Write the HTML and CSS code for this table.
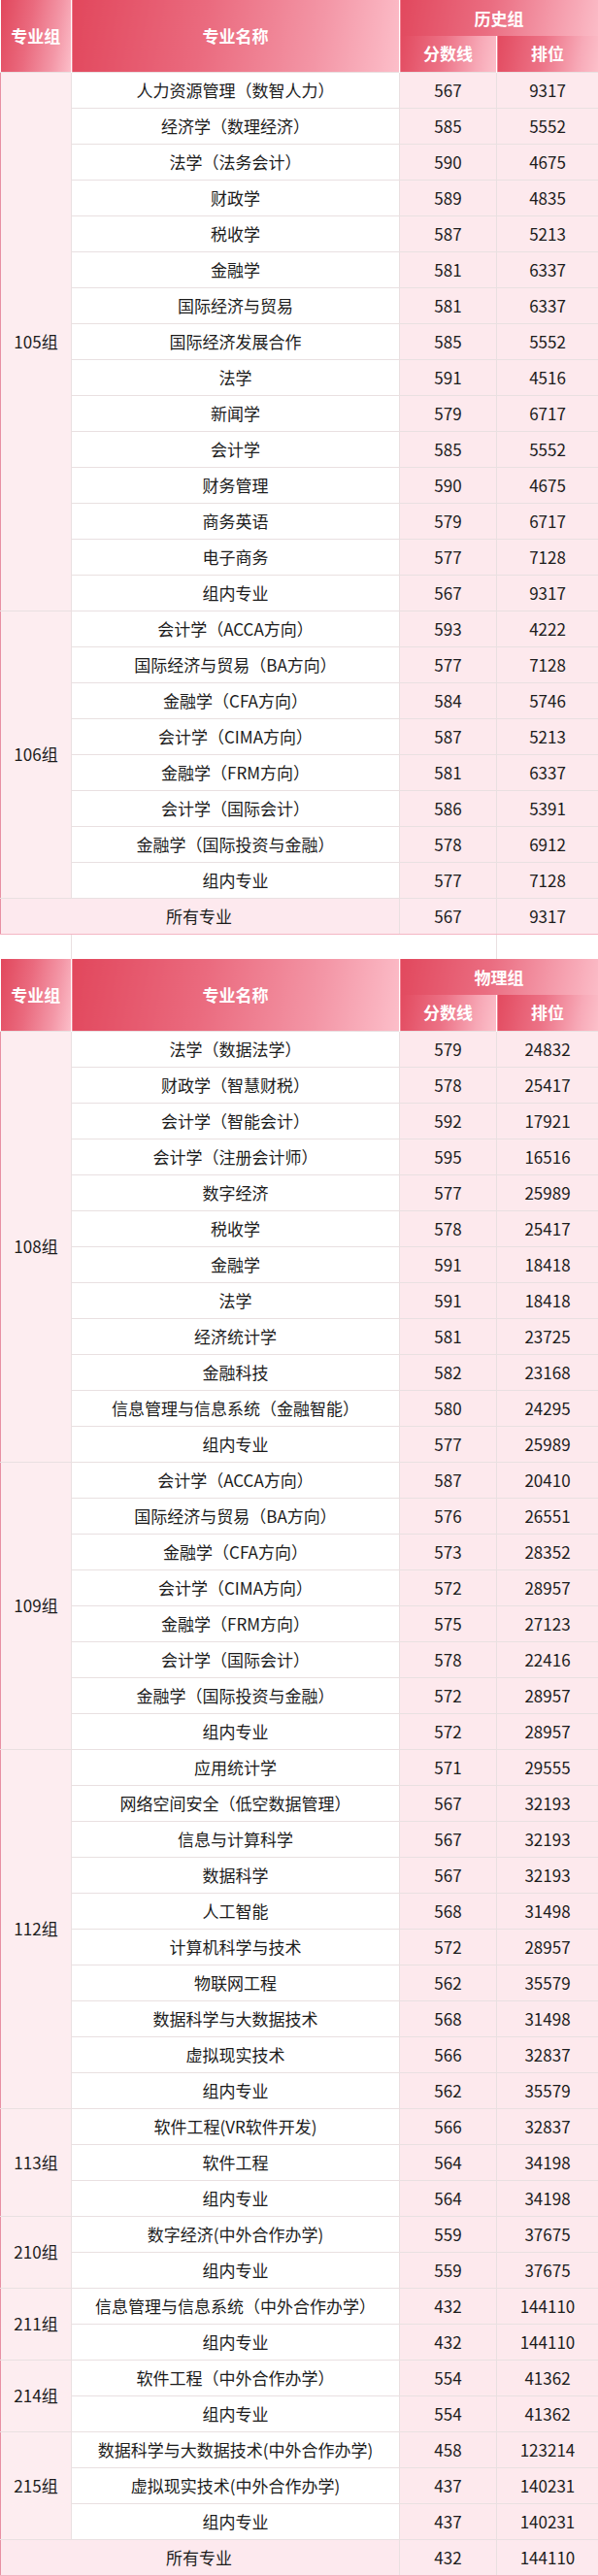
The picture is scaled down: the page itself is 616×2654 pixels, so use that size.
FILE: index.html
```html
<!DOCTYPE html>
<html lang="zh-CN">
<head>
<meta charset="utf-8">
<title>分数线</title>
<link rel="stylesheet" href="styles.css">
</head>
<body>
<table class="score">
<colgroup><col class="c1"><col class="c2"><col class="c3"><col class="c4"></colgroup>
<tbody>
<tr class="hd"><th rowspan="2" class="h-grp">专业组</th><th rowspan="2">专业名称</th><th colspan="2" class="h-top">历史组</th></tr>
<tr class="hd"><th class="h-sub">分数线</th><th class="h-sub">排位</th></tr>

<tr><td rowspan="15" class="grp">105组</td><td class="name">人力资源管理（数智人力）</td><td class="num">567</td><td class="num">9317</td></tr>
<tr><td class="name">经济学（数理经济）</td><td class="num">585</td><td class="num">5552</td></tr>
<tr><td class="name">法学（法务会计）</td><td class="num">590</td><td class="num">4675</td></tr>
<tr><td class="name">财政学</td><td class="num">589</td><td class="num">4835</td></tr>
<tr><td class="name">税收学</td><td class="num">587</td><td class="num">5213</td></tr>
<tr><td class="name">金融学</td><td class="num">581</td><td class="num">6337</td></tr>
<tr><td class="name">国际经济与贸易</td><td class="num">581</td><td class="num">6337</td></tr>
<tr><td class="name">国际经济发展合作</td><td class="num">585</td><td class="num">5552</td></tr>
<tr><td class="name">法学</td><td class="num">591</td><td class="num">4516</td></tr>
<tr><td class="name">新闻学</td><td class="num">579</td><td class="num">6717</td></tr>
<tr><td class="name">会计学</td><td class="num">585</td><td class="num">5552</td></tr>
<tr><td class="name">财务管理</td><td class="num">590</td><td class="num">4675</td></tr>
<tr><td class="name">商务英语</td><td class="num">579</td><td class="num">6717</td></tr>
<tr><td class="name">电子商务</td><td class="num">577</td><td class="num">7128</td></tr>
<tr><td class="name">组内专业</td><td class="num">567</td><td class="num">9317</td></tr>

<tr><td rowspan="8" class="grp">106组</td><td class="name">会计学（ACCA方向）</td><td class="num">593</td><td class="num">4222</td></tr>
<tr><td class="name">国际经济与贸易（BA方向）</td><td class="num">577</td><td class="num">7128</td></tr>
<tr><td class="name">金融学（CFA方向）</td><td class="num">584</td><td class="num">5746</td></tr>
<tr><td class="name">会计学（CIMA方向）</td><td class="num">587</td><td class="num">5213</td></tr>
<tr><td class="name">金融学（FRM方向）</td><td class="num">581</td><td class="num">6337</td></tr>
<tr><td class="name">会计学（国际会计）</td><td class="num">586</td><td class="num">5391</td></tr>
<tr><td class="name">金融学（国际投资与金融）</td><td class="num">578</td><td class="num">6912</td></tr>
<tr><td class="name">组内专业</td><td class="num">577</td><td class="num">7128</td></tr>

<tr class="all"><td colspan="2" class="all-name">所有专业</td><td class="num">567</td><td class="num">9317</td></tr>

<tr class="gap"><td class="gap-a"></td><td colspan="2" class="gap-b"></td><td class="gap-c"></td></tr>

<tr class="hd"><th rowspan="2" class="h-grp">专业组</th><th rowspan="2">专业名称</th><th colspan="2" class="h-top">物理组</th></tr>
<tr class="hd"><th class="h-sub">分数线</th><th class="h-sub">排位</th></tr>

<tr><td rowspan="12" class="grp">108组</td><td class="name">法学（数据法学）</td><td class="num">579</td><td class="num">24832</td></tr>
<tr><td class="name">财政学（智慧财税）</td><td class="num">578</td><td class="num">25417</td></tr>
<tr><td class="name">会计学（智能会计）</td><td class="num">592</td><td class="num">17921</td></tr>
<tr><td class="name">会计学（注册会计师）</td><td class="num">595</td><td class="num">16516</td></tr>
<tr><td class="name">数字经济</td><td class="num">577</td><td class="num">25989</td></tr>
<tr><td class="name">税收学</td><td class="num">578</td><td class="num">25417</td></tr>
<tr><td class="name">金融学</td><td class="num">591</td><td class="num">18418</td></tr>
<tr><td class="name">法学</td><td class="num">591</td><td class="num">18418</td></tr>
<tr><td class="name">经济统计学</td><td class="num">581</td><td class="num">23725</td></tr>
<tr><td class="name">金融科技</td><td class="num">582</td><td class="num">23168</td></tr>
<tr><td class="name">信息管理与信息系统（金融智能）</td><td class="num">580</td><td class="num">24295</td></tr>
<tr><td class="name">组内专业</td><td class="num">577</td><td class="num">25989</td></tr>

<tr><td rowspan="8" class="grp">109组</td><td class="name">会计学（ACCA方向）</td><td class="num">587</td><td class="num">20410</td></tr>
<tr><td class="name">国际经济与贸易（BA方向）</td><td class="num">576</td><td class="num">26551</td></tr>
<tr><td class="name">金融学（CFA方向）</td><td class="num">573</td><td class="num">28352</td></tr>
<tr><td class="name">会计学（CIMA方向）</td><td class="num">572</td><td class="num">28957</td></tr>
<tr><td class="name">金融学（FRM方向）</td><td class="num">575</td><td class="num">27123</td></tr>
<tr><td class="name">会计学（国际会计）</td><td class="num">578</td><td class="num">22416</td></tr>
<tr><td class="name">金融学（国际投资与金融）</td><td class="num">572</td><td class="num">28957</td></tr>
<tr><td class="name">组内专业</td><td class="num">572</td><td class="num">28957</td></tr>

<tr><td rowspan="10" class="grp">112组</td><td class="name">应用统计学</td><td class="num">571</td><td class="num">29555</td></tr>
<tr><td class="name">网络空间安全（低空数据管理）</td><td class="num">567</td><td class="num">32193</td></tr>
<tr><td class="name">信息与计算科学</td><td class="num">567</td><td class="num">32193</td></tr>
<tr><td class="name">数据科学</td><td class="num">567</td><td class="num">32193</td></tr>
<tr><td class="name">人工智能</td><td class="num">568</td><td class="num">31498</td></tr>
<tr><td class="name">计算机科学与技术</td><td class="num">572</td><td class="num">28957</td></tr>
<tr><td class="name">物联网工程</td><td class="num">562</td><td class="num">35579</td></tr>
<tr><td class="name">数据科学与大数据技术</td><td class="num">568</td><td class="num">31498</td></tr>
<tr><td class="name">虚拟现实技术</td><td class="num">566</td><td class="num">32837</td></tr>
<tr><td class="name">组内专业</td><td class="num">562</td><td class="num">35579</td></tr>

<tr><td rowspan="3" class="grp">113组</td><td class="name">软件工程(VR软件开发)</td><td class="num">566</td><td class="num">32837</td></tr>
<tr><td class="name">软件工程</td><td class="num">564</td><td class="num">34198</td></tr>
<tr><td class="name">组内专业</td><td class="num">564</td><td class="num">34198</td></tr>

<tr><td rowspan="2" class="grp">210组</td><td class="name">数字经济(中外合作办学)</td><td class="num">559</td><td class="num">37675</td></tr>
<tr><td class="name">组内专业</td><td class="num">559</td><td class="num">37675</td></tr>

<tr><td rowspan="2" class="grp">211组</td><td class="name">信息管理与信息系统（中外合作办学）</td><td class="num">432</td><td class="num">144110</td></tr>
<tr><td class="name">组内专业</td><td class="num">432</td><td class="num">144110</td></tr>

<tr><td rowspan="2" class="grp">214组</td><td class="name">软件工程（中外合作办学）</td><td class="num">554</td><td class="num">41362</td></tr>
<tr><td class="name">组内专业</td><td class="num">554</td><td class="num">41362</td></tr>

<tr><td rowspan="3" class="grp">215组</td><td class="name">数据科学与大数据技术(中外合作办学)</td><td class="num">458</td><td class="num">123214</td></tr>
<tr><td class="name">虚拟现实技术(中外合作办学)</td><td class="num">437</td><td class="num">140231</td></tr>
<tr><td class="name">组内专业</td><td class="num">437</td><td class="num">140231</td></tr>

<tr class="all"><td colspan="2" class="all-name">所有专业</td><td class="num">432</td><td class="num">144110</td></tr>
</tbody>
</table>
</body>
</html>
```
FILE: styles.css
```css
html, body {
  margin: 0;
  padding: 0;
  background: #ffffff;
}
body {
  width: 616px;
  font-family: "Noto Sans CJK SC", "Microsoft YaHei", sans-serif;
  color: #1c1c1c;
}
.score {
  width: 616px;
  border-collapse: collapse;
  table-layout: fixed;
}
.c1 { width: 73px; }
.c2 { width: 338px; }
.c3 { width: 100px; }
.c4 { width: 105px; }

.score tr { height: 37px; }
.score th,
.score td {
  padding: 0;
  text-align: center;
  vertical-align: middle;
  font-size: 17px;
  line-height: 20px;
  white-space: nowrap;
  overflow: hidden;
}
.score th {
  color: #ffffff;
  font-weight: 700;
  background: linear-gradient(100deg, #e1475c 0%, #ea6a7e 40%, #f396a6 75%, #fcbec9 100%);
  border-left: 1px solid #ffffff;
  border-right: 1px solid #ffffff;
  border-top: 0;
  border-bottom: 0;
}
.score th.h-grp { border-left: 0; }
.score th.h-top {
  background: linear-gradient(100deg, #e1485d 0%, #ea6d81 45%, #f59fae 80%, #fbbcc7 100%);
}
.score th.h-sub {
  background: linear-gradient(100deg, #e24a5f 0%, #ec7286 45%, #f7a9b7 80%, #fcc0ca 100%);
}
.score td {
  border: 1px solid #e9e0e1;
}
.score td.grp {
  background: #fdedf0;
  border-left: 1px solid #e890a3;
}
.score td.name {
  background: #ffffff;
}
.score td.num {
  background: #fde9ed;
}
.score tr.all td {
  background: #fde9ee;
  border-bottom: 1px solid #f4b6c4;
}
.score td.all-name {
  border-left: 1px solid #e890a3;
  padding-right: 2px;
}
.score tr.gap { height: 26px; }
.score tr.gap td {
  background: #ffffff;
  border-top: 1px solid #f4b6c4;
  border-bottom: 0;
  border-left: 0;
}
.score td.gap-a { border-right: 1px solid #e9e0e1; }
.score td.gap-b { border-right: 1px solid #e9e0e1; }
.score td.gap-c { border-right: 0; }
```
